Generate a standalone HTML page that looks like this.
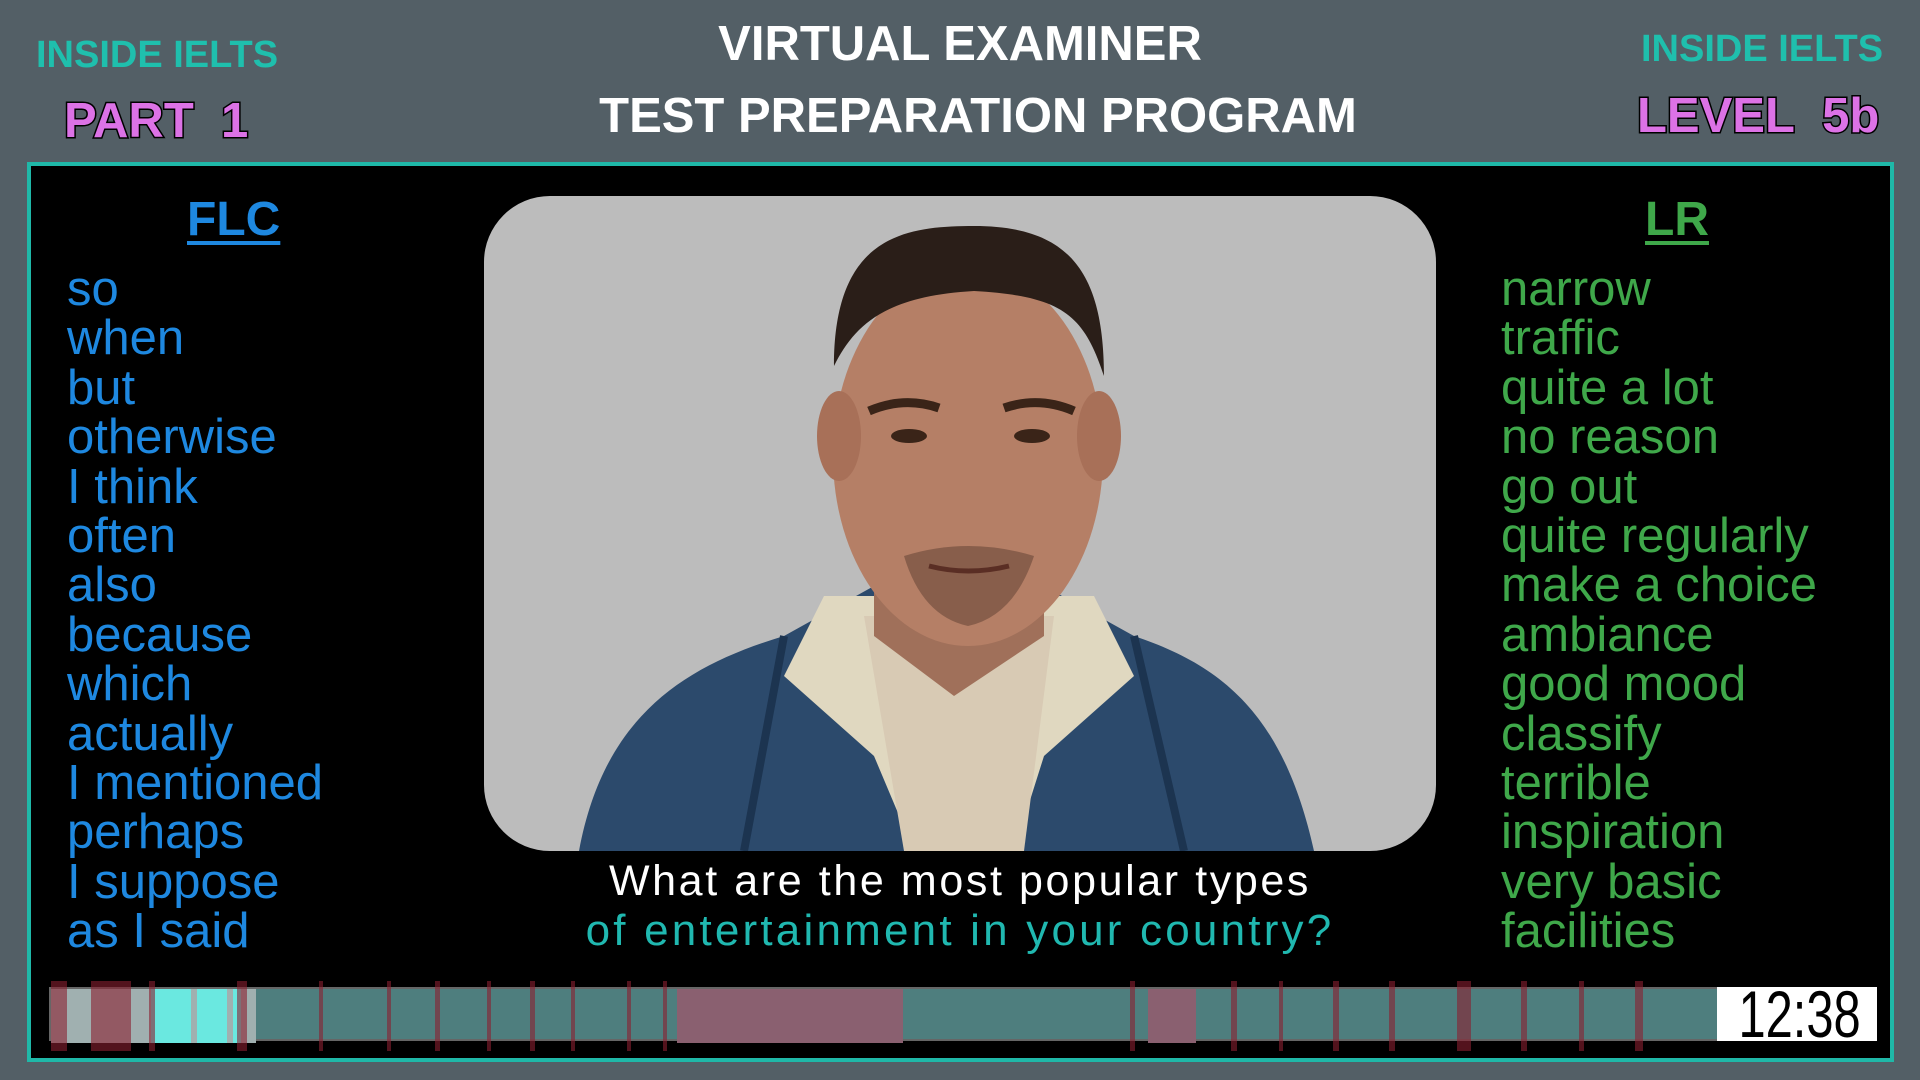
<!DOCTYPE html>
<html><head><meta charset="utf-8"><style>
*{margin:0;padding:0;box-sizing:border-box}
body{width:1920px;height:1080px;background:#535f66;position:relative;overflow:hidden;font-family:"Liberation Sans",Arial,sans-serif}
.a{position:absolute;white-space:nowrap}
.ie{color:#1fbfad;font-weight:bold;font-size:38px}
.mg{color:#dc72e6;font-weight:bold;font-size:49px;-webkit-text-stroke:3px #000;paint-order:stroke fill}
.tt{color:#fff;font-weight:bold;font-size:49px;left:0;width:1920px;text-align:center}
.panel{left:27px;top:162px;width:1867px;height:900px;background:#000;border:4px solid #1fb8a8}
.words{font-size:49px;line-height:49.4px}
.seg{position:absolute;top:0;height:54px}
.rl{position:absolute;top:-8px;height:70px;background:#8a2030;opacity:.6}
</style></head><body>
<div class="a ie" style="left:36px;top:34px">INSIDE IELTS</div>
<div class="a ie" style="left:1641px;top:28px">INSIDE IELTS</div>
<div class="a mg" style="left:64px;top:93px">PART&nbsp;&nbsp;1</div>
<div class="a mg" style="left:1637px;top:88px">LEVEL&nbsp;&nbsp;5b</div>
<div class="a tt" style="top:16px">VIRTUAL EXAMINER</div>
<div class="a tt" style="top:88px;left:18px">TEST PREPARATION PROGRAM</div>
<div class="a panel"></div>
<div class="a" style="left:187px;top:192px;font-size:48px;font-weight:bold;color:#1e88e0;text-decoration:underline;text-decoration-thickness:4px;text-underline-offset:6px">FLC</div>
<div class="a" style="left:1645px;top:192px;font-size:48px;font-weight:bold;color:#3fa84a;text-decoration:underline;text-decoration-thickness:4px;text-underline-offset:6px">LR</div>
<div class="a words" style="left:67px;top:265px;color:#1e88e0">so<br>when<br>but<br>otherwise<br>I think<br>often<br>also<br>because<br>which<br>actually<br>I mentioned<br>perhaps<br>I suppose<br>as I said</div>
<div class="a words" style="left:1501px;top:265px;color:#3fa84a">narrow<br>traffic<br>quite a lot<br>no reason<br>go out<br>quite regularly<br>make a choice<br>ambiance<br>good mood<br>classify<br>terrible<br>inspiration<br>very basic<br>facilities</div>
<div class="a" style="left:484px;top:196px;width:952px;height:655px;background:#bcbcbc;border-radius:66px;overflow:hidden">
<svg width="952" height="655" viewBox="0 0 952 655">
<path d="M95 655 C120 520 200 470 300 440 L390 390 L560 390 L650 440 C740 470 800 520 830 655Z" fill="#2c4a6c"/>
<path d="M300 440 L260 655 M650 440 L700 655" stroke="#1c3450" stroke-width="8"/>
<path d="M340 400 L300 480 L390 560 L430 655 L530 655 L560 560 L650 480 L610 400Z" fill="#e0d8c0"/>
<path d="M380 420 L420 655 L540 655 L570 420Z" fill="#d8cab4"/>
<path d="M390 300 L390 440 L470 500 L560 440 L560 300Z" fill="#a0705a"/>
<ellipse cx="484" cy="260" rx="135" ry="190" fill="#b57f66"/>
<ellipse cx="355" cy="240" rx="22" ry="45" fill="#a87058"/>
<ellipse cx="615" cy="240" rx="22" ry="45" fill="#a87058"/>
<path d="M350 170 C350 40 420 30 490 30 C580 30 620 70 620 180 C600 120 580 100 490 95 C400 100 370 130 350 170Z" fill="#2a1e18"/>
<path d="M385 215 Q420 200 455 212 M520 212 Q555 200 590 215" stroke="#3a2418" stroke-width="9" fill="none"/>
<ellipse cx="425" cy="240" rx="18" ry="7" fill="#3a2418"/>
<ellipse cx="548" cy="240" rx="18" ry="7" fill="#3a2418"/>
<path d="M420 360 Q484 340 550 360 Q530 420 484 430 Q438 420 420 360Z" fill="#6a4838" opacity=".6"/>
<path d="M445 370 Q484 380 525 370" stroke="#5a2e24" stroke-width="5" fill="none"/>
</svg></div>
<div class="a" style="left:0;width:1920px;text-align:center;top:857px;font-size:43px;letter-spacing:2.6px;color:#fff">What are the most popular types</div>
<div class="a" style="left:0;width:1920px;text-align:center;top:906px;font-size:44px;letter-spacing:3.2px;color:#20b8b0">of entertainment in your country?</div>
<div class="a" style="left:49px;top:987px;width:1828px;height:54px;background:#4e7e7e;border:2px solid #666">
<div class="seg" style="left:0;width:205px;background:#a0b0b0"></div>
<div class="seg" style="left:100px;width:90px;background:#6ae8e0"></div>
<div class="seg" style="left:140px;width:6px;background:#a0b0b0"></div>
<div class="seg" style="left:176px;width:6px;background:#a0b0b0"></div>
<div class="seg" style="left:626px;width:226px;background:#8a6070"></div>
<div class="seg" style="left:1097px;width:48px;background:#8a6070"></div>
<div class="rl" style="left:0;width:16px"></div><div class="rl" style="left:40px;width:40px"></div>
<div class="rl" style="left:98px;width:6px"></div><div class="rl" style="left:186px;width:10px"></div>
<div class="rl" style="left:268px;width:4px"></div><div class="rl" style="left:336px;width:4px"></div>
<div class="rl" style="left:384px;width:5px"></div><div class="rl" style="left:436px;width:4px"></div>
<div class="rl" style="left:479px;width:5px"></div><div class="rl" style="left:520px;width:4px"></div>
<div class="rl" style="left:576px;width:4px"></div><div class="rl" style="left:612px;width:4px"></div>
<div class="rl" style="left:1079px;width:5px"></div><div class="rl" style="left:1180px;width:6px"></div>
<div class="rl" style="left:1228px;width:4px"></div><div class="rl" style="left:1282px;width:6px"></div>
<div class="rl" style="left:1338px;width:6px"></div><div class="rl" style="left:1406px;width:14px"></div>
<div class="rl" style="left:1470px;width:6px"></div><div class="rl" style="left:1528px;width:5px"></div>
<div class="rl" style="left:1584px;width:8px"></div>
<div style="position:absolute;left:1666px;top:-2px;width:160px;height:54px;background:#fff;color:#000;font-size:66px;line-height:54px;text-align:center;overflow:hidden"><span style="display:inline-block;transform:scaleX(.74)">12:38</span></div>
</div>
</body></html>
